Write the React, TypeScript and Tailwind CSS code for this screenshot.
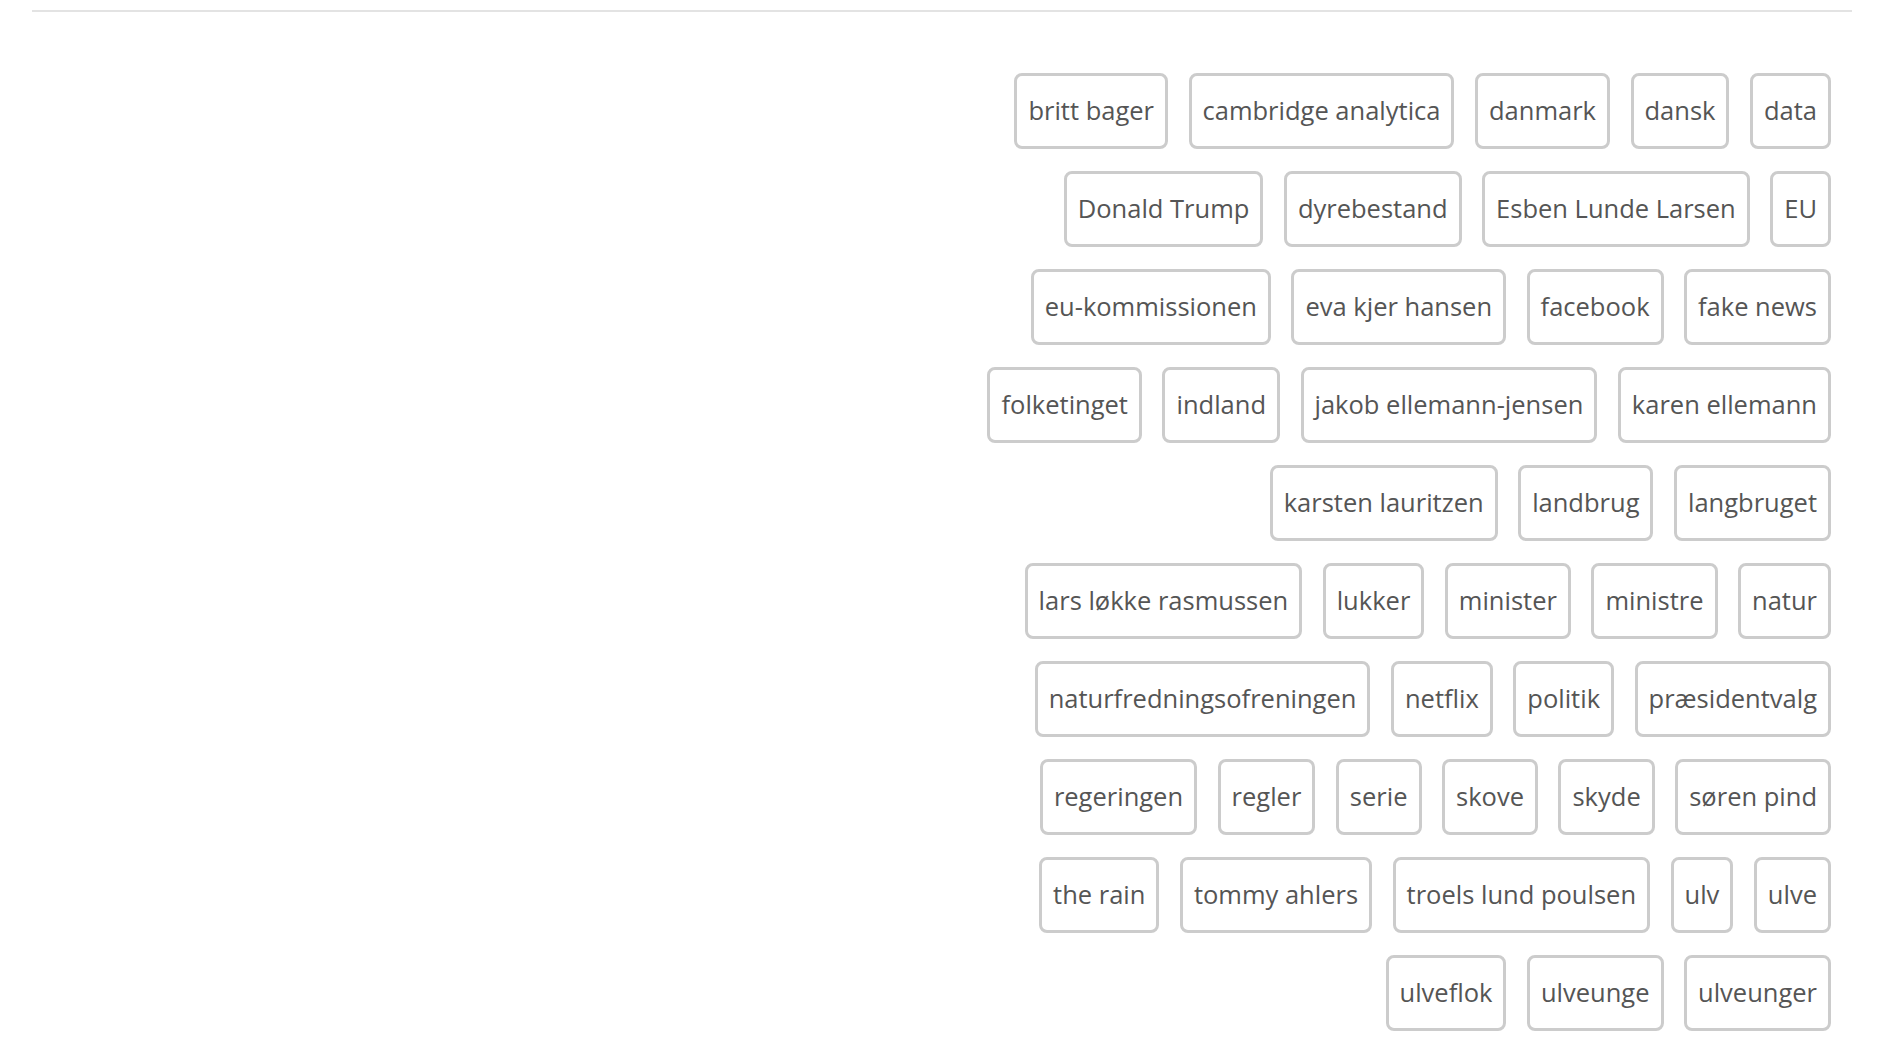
const rows: string[][] = [
  ['britt bager', 'cambridge analytica', 'danmark', 'dansk', 'data'],
  ['Donald Trump', 'dyrebestand', 'Esben Lunde Larsen', 'EU'],
  ['eu-kommissionen', 'eva kjer hansen', 'facebook', 'fake news'],
  ['folketinget', 'indland', 'jakob ellemann-jensen', 'karen ellemann'],
  ['karsten lauritzen', 'landbrug', 'langbruget'],
  ['lars løkke rasmussen', 'lukker', 'minister', 'ministre', 'natur'],
  ['naturfredningsofreningen', 'netflix', 'politik', 'præsidentvalg'],
  ['regeringen', 'regler', 'serie', 'skove', 'skyde', 'søren pind'],
  ['the rain', 'tommy ahlers', 'troels lund poulsen', 'ulv', 'ulve'],
  ['ulveflok', 'ulveunge', 'ulveunger'],
];

const Tag = ({ label }: { label: string }) => (
  <a
    href="#"
    className="flex h-[76px] items-center rounded-[8px] border-[3px] border-[#cccccc] bg-white px-[11px] text-[25.5px] leading-none whitespace-nowrap text-[#555555]"
  >
    {label}
  </a>
);

export default function App() {
  return (
    <div className="min-h-screen bg-white px-[32px] pt-[10px] font-['Open_Sans',sans-serif]">
      <hr className="border-0 border-t-2 border-[#e3e3e3]" />
      <div className="mt-[61px] flex flex-col gap-[22px] pr-[21px]">
        {rows.map((row, i) => (
          <div key={i} className="flex justify-end gap-[20.5px]">
            {row.map((t) => (
              <Tag key={t} label={t} />
            ))}
          </div>
        ))}
      </div>
    </div>
  );
}
